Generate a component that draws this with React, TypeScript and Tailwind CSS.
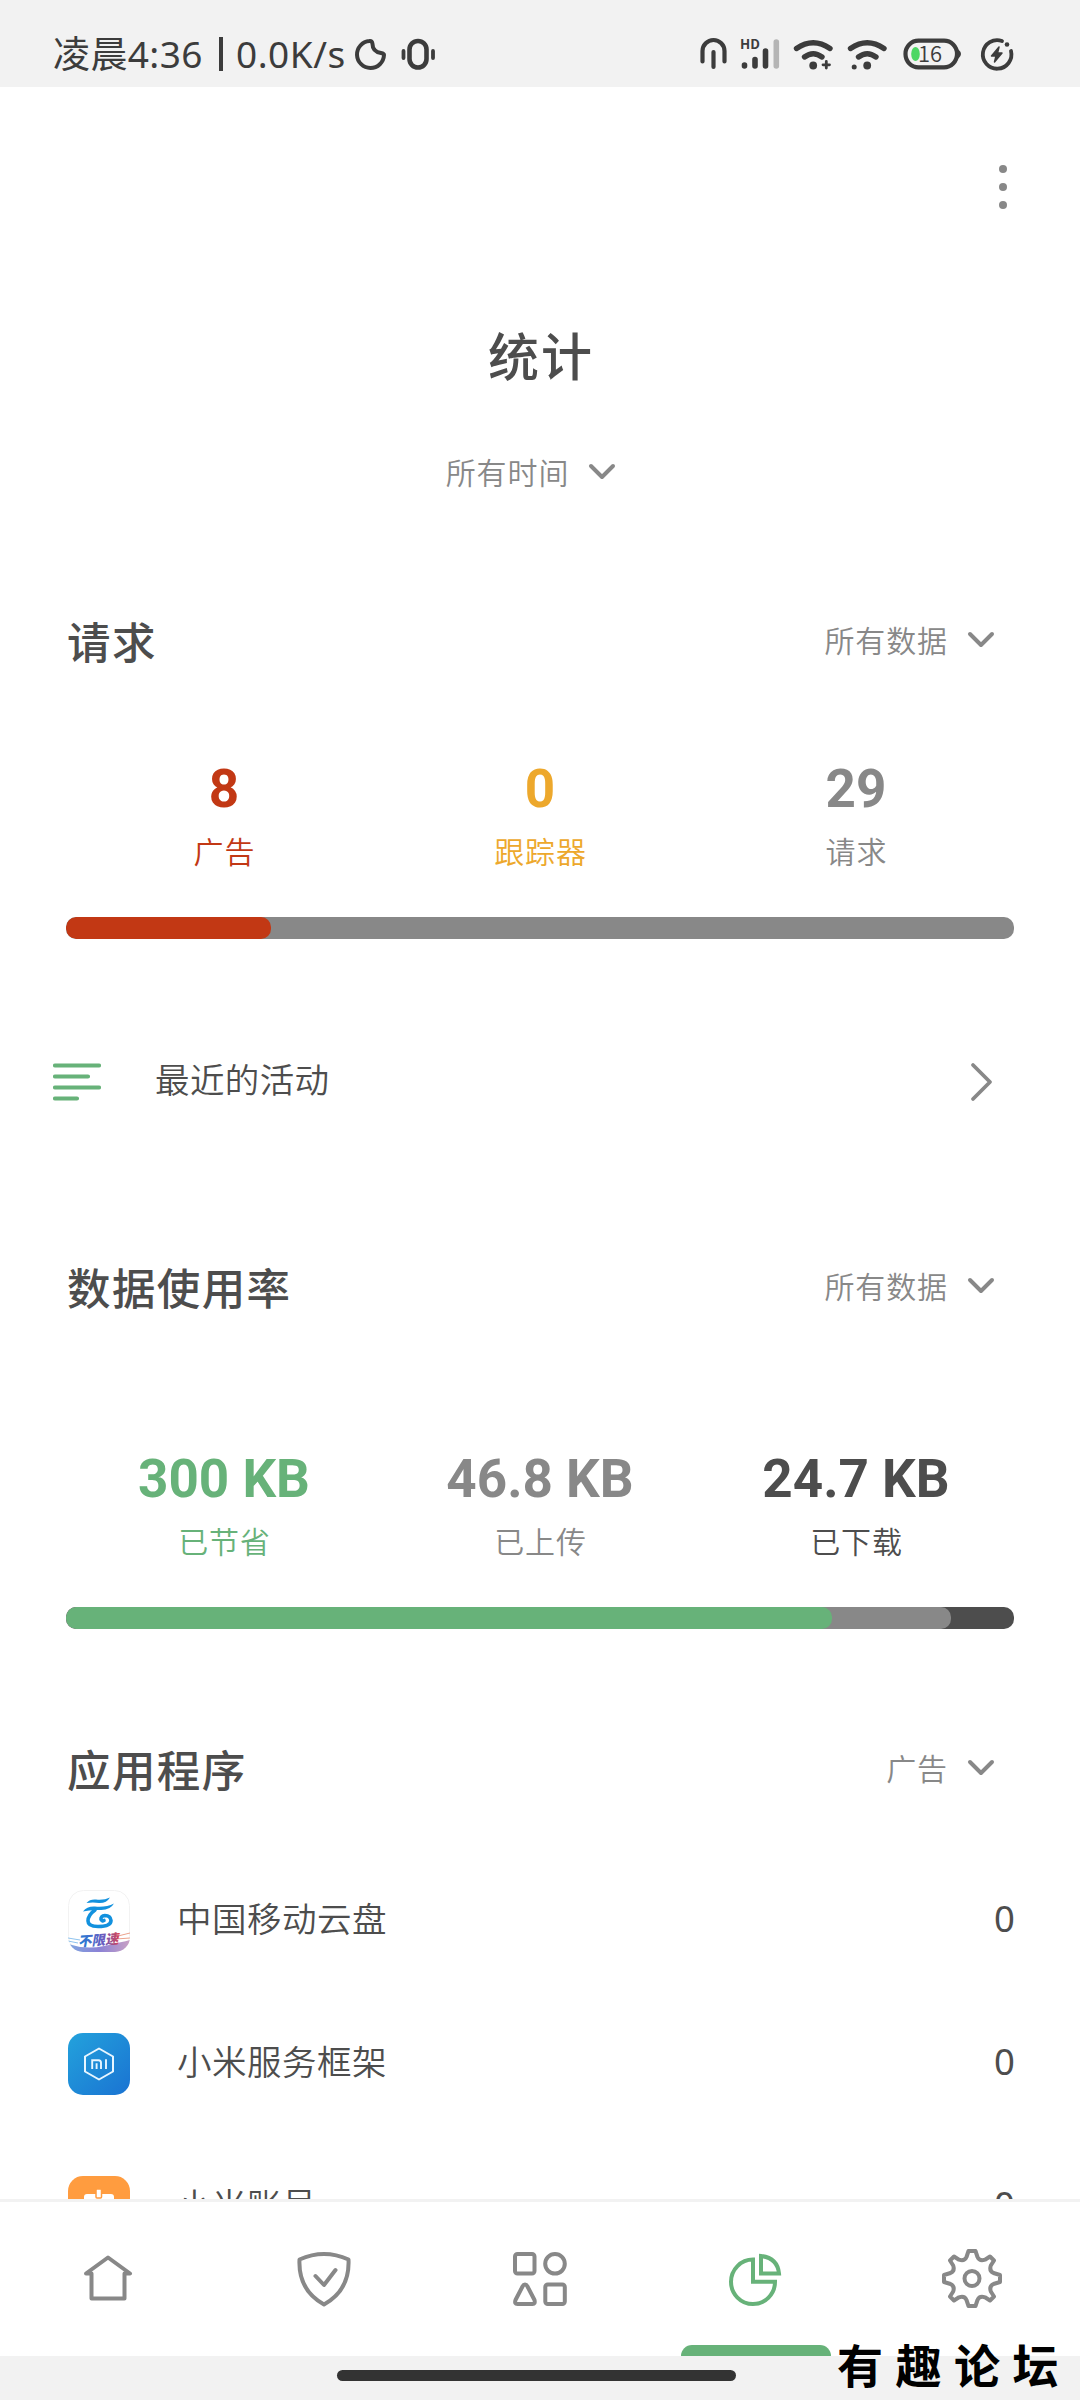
import type { ReactNode } from "react"

const INK = "#3c3c3c"

function Chevron() {
  return (
    <svg width="30" height="20" viewBox="0 0 30 20" fill="none" stroke="#888888" strokeWidth="4" strokeLinecap="round" strokeLinejoin="round">
      <path d="M4 5 L15 16 L26 5" />
    </svg>
  )
}

function Dropdown({ label }: { label: string }) {
  return (
    <button className="flex items-center gap-[18px] text-[30px] leading-[44px] tracking-[0.9px] font-[350] text-[#888888]">
      <span>{label}</span>
      <Chevron />
    </button>
  )
}

function SectionHeader({ title, filter }: { title: string; filter: string }) {
  return (
    <div className="flex h-[64px] items-center justify-between pl-[67px] pr-[84px]">
      <h2 className="text-[43.5px] leading-[64px] tracking-[1.4px] font-medium text-[#4d4d4d]">{title}</h2>
      <div className="pb-[5px]"><Dropdown label={filter} /></div>
    </div>
  )
}

type StatItem = { value: string; label: string; color: string }

function Stats({ items }: { items: StatItem[] }) {
  return (
    <div className="grid grid-cols-3 px-[66px]">
      {items.map(s => (
        <div key={s.label} className={`flex flex-col items-center ${s.color}`}>
          <span className="font-[Roboto,sans-serif] text-[53px] leading-[64px] font-bold">{s.value}</span>
          <span className="text-[30px] leading-[44px] tracking-[0.9px] font-[350] mt-[7px] pl-[1px]">{s.label}</span>
        </div>
      ))}
    </div>
  )
}

function AppRow({ icon, name, count }: { icon: ReactNode; name: string; count: number }) {
  return (
    <div className="flex h-[143px] shrink-0 items-center pl-[68px] pr-[65px] text-[34.5px] text-[#4d4d4d]">
      <div className="h-[62px] w-[62px] shrink-0">{icon}</div>
      <span className="ml-[47px] flex-1 tracking-[0.5px] font-[350] pb-[6px]">{name}</span>
      <span className="pb-[4px] text-[36.5px] font-['Noto_Sans',sans-serif]">{count}</span>
    </div>
  )
}

function CloudIcon() {
  return (
    <svg width="62" height="62" viewBox="0 0 62 62" fill="none">
      <defs>
        <linearGradient id="cloudBase" x1="0" y1="0" x2="1" y2="0">
          <stop offset="0" stopColor="#7fa6e0" />
          <stop offset="0.5" stopColor="#8b82d6" />
          <stop offset="1" stopColor="#c9a0c4" />
        </linearGradient>
        <linearGradient id="cloudText" x1="0" y1="0" x2="1" y2="0">
          <stop offset="0" stopColor="#1f7fd6" />
          <stop offset="0.6" stopColor="#6a5bc0" />
          <stop offset="1" stopColor="#e0404a" />
        </linearGradient>
        <clipPath id="cloudClip"><rect width="62" height="62" rx="15" /></clipPath>
      </defs>
      <rect x="0.5" y="0.5" width="61" height="61" rx="15" fill="#fff" stroke="#f2f2f2" />
      <g clipPath="url(#cloudClip)">
        <path d="M0 54 Q18 60 36 56 T62 50 V62 H0Z" fill="url(#cloudBase)" />
        <path d="M0 48 L12 50 M0 51 L10 53" stroke="#8fc3ee" strokeWidth="1" />
        <path d="M50 46 L62 43 M48 49 L62 48" stroke="#eba28c" strokeWidth="1" />
      </g>
      {/* cloud mark: top stroke, roof, curl */}
      <path d="M18.5 13 Q22 9 28 9.6 Q36 10.5 42 7.5 Q38.5 13.3 31 13 Q25 12 18.5 13Z" fill="#1291de" />
      <path d="M15 21.5 Q19 16 27 16.5 Q38 17.5 46 13.5 Q42 20.5 32 20 Q22 19.5 15 21.5Z" fill="#1291de" />
      <path d="M27 20 Q20 25 20 31 Q20 36.5 30 36.5 Q43 36.5 43 30.5 Q42.5 25.5 37 25.5 Q32.5 26 33 29.5 Q34 31.5 36 30.5" stroke="#1291de" strokeWidth="3.6" strokeLinecap="round" strokeLinejoin="round" />
      <text x="10" y="55" fontSize="13.5" fontWeight="900" fontStyle="italic" fill="url(#cloudText)" transform="rotate(-4 30 52)">不限速</text>
    </svg>
  )
}

function MiFrameworkIcon() {
  return (
    <svg width="62" height="62" viewBox="0 0 62 62" fill="none">
      <defs>
        <linearGradient id="miBlue" x1="0" y1="0" x2="1" y2="1">
          <stop offset="0" stopColor="#23a2dc" />
          <stop offset="1" stopColor="#1a73d2" />
        </linearGradient>
      </defs>
      <rect width="62" height="62" rx="15" fill="url(#miBlue)" />
      <path d="M31 15.5 L45 23.5 V38.5 L31 46.5 L17 38.5 V23.5Z" stroke="#e8f6ff" strokeWidth="2" strokeLinejoin="round" />
      <path d="M24.2 36 V27.2 H30.5 Q33 27.2 33 29.8 V36 M28.6 30.3 V36 M38 26.3 V36" stroke="#e8f6ff" strokeWidth="1.9" />
    </svg>
  )
}

function MiAccountIcon() {
  return (
    <svg width="62" height="62" viewBox="0 0 62 62" fill="none">
      <rect width="62" height="62" rx="15" fill="#ff9c3f" />
      <rect x="16" y="18" width="30" height="26" rx="3" fill="#fff" />
      <rect x="28" y="13" width="5.5" height="9" rx="1" fill="#fff" stroke="#ff9c3f" strokeWidth="1.5" />
    </svg>
  )
}

function StatusIcons() {
  return (
    <svg width="320" height="40" viewBox="0 0 320 40" fill="none" stroke={INK} strokeLinecap="round" strokeLinejoin="round">
      {/* headset */}
      <path d="M4.5 25.5 V15 A11 11 0 0 1 26.5 15 V25.5 M15.5 16 V31" strokeWidth="4.2" />
      {/* signal */}
      <text x="42" y="13" fontSize="13.5" fontWeight="700" fill={INK} stroke="none">HD</text>
      <path d="M46.5 29 V30 M57 23.5 V30 M67.5 15 V30" strokeWidth="5.6" />
      <path d="M78.3 6 V30" strokeWidth="5.6" stroke="#b5b5b5" />
      {/* wifi + */}
      <path d="M98.5 12.5 Q115.2 1 132 12.5 M106.5 21 Q115.2 14.5 124 21" strokeWidth="5.4" />
      <circle cx="115.2" cy="29.5" r="3.9" fill={INK} stroke="none" />
      <path d="M128.3 25.5 V32 M125 28.8 H131.5" strokeWidth="2.8" />
      {/* wifi */}
      <path d="M152.5 12.5 Q169.2 1 186 12.5 M160.5 21 Q169.2 14.5 178 21" strokeWidth="5.4" />
      <circle cx="169.2" cy="29.5" r="3.9" fill={INK} stroke="none" />
      <circle cx="156.2" cy="31" r="2.5" fill={INK} stroke="none" />
      {/* battery */}
      <rect x="207.5" y="4.7" width="51.5" height="26.6" rx="13" strokeWidth="4.2" />
      <path d="M260 14.5 Q264 18 260 21.5Z" fill={INK} strokeWidth="2" />
      <ellipse cx="217.5" cy="18" rx="4.3" ry="7" fill="#4cd764" stroke="none" />
      <text x="220" y="26" fontSize="22" fontWeight="350" fill={INK} stroke="none">16</text>
      {/* charging */}
      <path d="M304 5 A14.3 14.3 0 1 0 313 15" strokeWidth="3.8" />
      <circle cx="309" cy="8.5" r="2.3" fill={INK} stroke="none" />
      <path d="M301 11 L293.5 20 H298 L296.5 26 L304 17 H299.5Z" fill={INK} strokeWidth="1.5" />
    </svg>
  )
}

function StatusBar() {
  return (
    <header className="flex h-[87px] shrink-0 items-start justify-between bg-[#f2f2f2] pl-[53px] pr-[62px] pt-[36px] text-[#3c3c3c]">
      <div className="flex h-[40px] items-center">
        <div className="flex w-[294px] items-center pb-[5px] text-[37px] leading-[40px] whitespace-nowrap font-['Noto_Sans','Noto_Sans_CJK_SC',sans-serif]">
          <span className="w-[166px] tracking-[0.4px]">凌晨4:36</span>
          <span className="h-[34px] w-[4px] bg-[#3c3c3c]" />
          <span className="ml-[13px] tracking-[0.5px]">0.0K/s</span>
        </div>
        <svg className="ml-[5px]" width="84" height="40" viewBox="0 0 84 40" fill="none" stroke={INK} strokeWidth="4" strokeLinecap="round" strokeLinejoin="round">
          <path d="M17.5 5 A13.5 13.5 0 1 0 32 19 Q32 17.5 29 17 Q20.5 15.5 20.5 8 Q20 4.5 17.5 5Z" />
          <rect x="57.5" y="5" width="17" height="26.5" rx="8.5" strokeWidth="4.6" />
          <path d="M51.5 15 V22 M81 15 V22" strokeWidth="3.8" />
        </svg>
      </div>
      <StatusIcons />
    </header>
  )
}

function NavIcon({ children, active }: { children: ReactNode; active?: boolean }) {
  return (
    <button className="flex flex-1 flex-col items-center justify-between pt-[45px]">
      <svg width="64" height="64" viewBox="-32 -32 64 64" fill="none" stroke={active ? "#67b279" : "#888888"} strokeWidth="4" strokeLinecap="round" strokeLinejoin="round">
        {children}
      </svg>
      {active && <span className="h-[11px] w-[150px] rounded-t-[11px] bg-[#67b279]" />}
    </button>
  )
}

function NavBar() {
  return (
    <nav className="flex h-[157px] shrink-0 border-t-[3px] border-[#f2f2f2] bg-white">
      <NavIcon>
        <path d="M-16.5 -5.5 H-22 L0 -21.5 L22 -5.5 H16.5 V19.5 H-16.5Z" />
      </NavIcon>
      <NavIcon>
        <path d="M-24.5 -19.5 Q0 -30.5 24.5 -19.5 Q26 11 0 25.5 Q-26 11 -24.5 -19.5Z M-8.5 -3 L0 6 L11.5 -9" />
      </NavIcon>
      <NavIcon>
        <rect x="-25" y="-25" width="19.5" height="19.5" rx="2.5" />
        <circle cx="15" cy="-15.2" r="9.8" />
        <path d="M-15 5.5 Q-13.5 5.5 -12.5 7.5 L-5.5 21 Q-4.5 25 -7.5 25 H-22.5 Q-25.8 25 -24.5 21 L-17.5 7.5 Q-16.5 5.5 -15 5.5Z" />
        <rect x="5.3" y="5.5" width="19.5" height="19.5" rx="2.5" />
      </NavIcon>
      <NavIcon active>
        <path d="M-3 -19.5 A22 22.3 0 1 0 19 2.8 H-3Z" strokeLinejoin="miter" />
        <path d="M5 -23 V-5.5 H23 Q21.5 -21 5 -23Z" strokeLinejoin="miter" />
      </NavIcon>
      <NavIcon>
        <circle cy="-0.5" r="7.5" />
        <path transform="translate(0 -0.5)" d="M-3.5 -27.5 H3.5 L5.5 -21.5 Q7.5 -17 13 -18.8 L18 -22 L22 -18 L18.8 -13 Q17 -7.5 21.5 -5.5 L28 -3.5 V3.5 L21.5 5.5 Q17 7.5 18.8 13 L22 18 L18 22 L13 18.8 Q7.5 17 5.5 21.5 L3.5 27.5 H-3.5 L-5.5 21.5 Q-7.5 17 -13 18.8 L-18 22 L-22 18 L-18.8 13 Q-17 7.5 -21.5 5.5 L-28 3.5 V-3.5 L-21.5 -5.5 Q-17 -7.5 -18.8 -13 L-22 -18 L-18 -22 L-13 -18.8 Q-7.5 -17 -5.5 -21.5Z" />
      </NavIcon>
    </nav>
  )
}

export default function App() {
  return (
    <div className="relative flex h-[2400px] w-[1080px] flex-col overflow-hidden bg-white font-['Noto_Sans_CJK_SC',sans-serif]">
      <StatusBar />

      <main className="flex min-h-0 flex-1 flex-col overflow-hidden">
        {/* Overflow menu */}
        <div className="flex justify-end pr-[73px] pt-[78px]">
          <button className="flex flex-col gap-[10px]">
            <span className="h-2 w-2 rounded-full bg-[#888888]" />
            <span className="h-2 w-2 rounded-full bg-[#888888]" />
            <span className="h-2 w-2 rounded-full bg-[#888888]" />
          </button>
        </div>

        <h1 className="mt-[107px] pl-[2px] text-center text-[51px] leading-[76px] tracking-[2px] font-medium text-[#4d4d4d]">统计</h1>
        <div className="mt-[57px] flex justify-center pr-[17px]">
          <Dropdown label="所有时间" />
        </div>

        {/* Requests */}
        <div className="mt-[116px]"><SectionHeader title="请求" filter="所有数据" /></div>
        <div className="mt-[84px]">
          <Stats items={[
            { value: "8", label: "广告", color: "text-[#c23814]" },
            { value: "0", label: "跟踪器", color: "text-[#eda82c]" },
            { value: "29", label: "请求", color: "text-[#888888]" },
          ]} />
        </div>
        <div className="mx-[66px] mt-[45px] h-[22px] shrink-0 overflow-hidden rounded-[10px] bg-[#888888]">
          <div className="h-full w-[205px] rounded-[10px] bg-[#c23814]" />
        </div>

        {/* Recent activity */}
        <div className="mt-[103px] flex h-[80px] shrink-0 items-center pl-[53px] pr-[86px]">
          <svg width="48" height="40" viewBox="0 0 48 40" stroke="#67b279" strokeWidth="4.2" strokeLinecap="round">
            <path d="M2 3.5 H46 M2 14.5 H35 M2 25.5 H46 M2 36.5 H24" />
          </svg>
          <span className="ml-[54px] flex-1 pb-[6px] text-[34.5px] tracking-[0.4px] font-[350] text-[#4d4d4d]">最近的活动</span>
          <svg width="24" height="40" viewBox="0 0 24 40" fill="none" stroke="#888888" strokeWidth="3.8" strokeLinecap="round" strokeLinejoin="round">
            <path d="M3 3 L20 20 L3 37" />
          </svg>
        </div>

        {/* Data usage */}
        <div className="mt-[133px]"><SectionHeader title="数据使用率" filter="所有数据" /></div>
        <div className="mt-[128px]">
          <Stats items={[
            { value: "300 KB", label: "已节省", color: "text-[#67b279]" },
            { value: "46.8 KB", label: "已上传", color: "text-[#888888]" },
            { value: "24.7 KB", label: "已下载", color: "text-[#4d4d4d]" },
          ]} />
        </div>
        <div className="mx-[66px] mt-[45px] h-[22px] shrink-0 overflow-hidden rounded-[10px] bg-[#4d4d4d]">
          <div className="h-full w-[885px] rounded-[10px] bg-[#888888]">
            <div className="h-full w-[766px] rounded-[10px] bg-[#67b279]" />
          </div>
        </div>

        {/* Apps */}
        <div className="mt-[108px]"><SectionHeader title="应用程序" filter="广告" /></div>
        <div className="mt-[48px]">
          <AppRow icon={<CloudIcon />} name="中国移动云盘" count={0} />
          <AppRow icon={<MiFrameworkIcon />} name="小米服务框架" count={0} />
          <AppRow icon={<MiAccountIcon />} name="小米账号" count={0} />
        </div>
      </main>

      <NavBar />
      <footer className="flex h-[44px] shrink-0 justify-center bg-[#f2f2f2] pt-[14px] pr-[7px]">
        <div className="h-[11px] w-[399px] rounded-full bg-[#333333]" />
      </footer>

      {/* Forum watermark */}
      <span className="absolute left-[837px] top-[2331px] text-[46px] leading-[64px] tracking-[12.5px] font-bold text-black">有趣论坛</span>
    </div>
  )
}
